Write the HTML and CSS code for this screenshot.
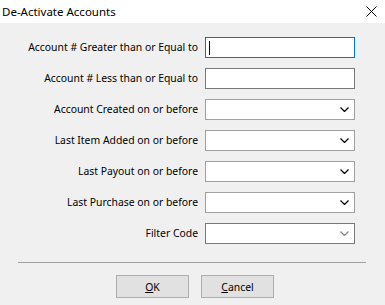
FILE: index.html
```html
<!DOCTYPE html>
<html><head>
<meta http-equiv="Content-Type" content="text/html; charset=utf-8">
<title>De-Activate Accounts</title>
<link rel="stylesheet" href="styles.css"></head>

<body>
<div class="titlebar">
<span class="title">De-Activate Accounts</span>
<svg class="close" width="11" height="11" viewBox="0 0 11 11"><path d="M0.5 0.5 L10.5 10.5 M10.5 0.5 L0.5 10.5" stroke="#000" stroke-width="1"/></svg>
</div>

<div class="form">
<label>Account # Greater than or Equal to</label>
<div class="field focus"><span class="caret"></span></div>

<label>Account # Less than or Equal to</label>
<div class="field"></div>

<label>Account Created on or before</label>
<div class="field combo"><svg class="arrow" width="9" height="5" viewBox="0 0 9 5"><path d="M0.5 0.5 L4.5 4.5 L8.5 0.5" fill="none" stroke="#000" stroke-width="1.3"/></svg></div>

<label>Last Item Added on or before</label>
<div class="field combo"><svg class="arrow" width="9" height="5" viewBox="0 0 9 5"><path d="M0.5 0.5 L4.5 4.5 L8.5 0.5" fill="none" stroke="#000" stroke-width="1.3"/></svg></div>

<label>Last Payout on or before</label>
<div class="field combo"><svg class="arrow" width="9" height="5" viewBox="0 0 9 5"><path d="M0.5 0.5 L4.5 4.5 L8.5 0.5" fill="none" stroke="#000" stroke-width="1.3"/></svg></div>

<label>Last Purchase on or before</label>
<div class="field combo"><svg class="arrow" width="9" height="5" viewBox="0 0 9 5"><path d="M0.5 0.5 L4.5 4.5 L8.5 0.5" fill="none" stroke="#000" stroke-width="1.3"/></svg></div>

<label>Filter Code</label>
<div class="field combo dark"><svg class="arrow" width="9" height="5" viewBox="0 0 9 5"><path d="M0.5 0.5 L4.5 4.5 L8.5 0.5" fill="none" stroke="#888" stroke-width="1.3"/></svg></div>
</div>

<hr class="sep">

<div class="buttons">
<button class="button"><u>O</u>K</button>
<button class="button"><u>C</u>ancel</button>
</div>
</body>
</html>
```

FILE: styles.css
```css
/* dialog window */
body {
	margin: 0;
	background-color: #f0f0f0;
	font-family: "Noto Sans", "Open Sans", sans-serif;
	font-size: 10.4px;
	color: #000;
	width: 385px;
	height: 305px;
	overflow: hidden;
}

.titlebar {
	background-color: #ffffff;
	height: 23px;
	display: flex;
	align-items: center;
	justify-content: space-between;
	padding: 0 8px 0 2px;
}
.title {
	font-size: 11.5px;
	color: #000;
}

/* labels + inputs */
.form {
	display: grid;
	grid-template-columns: 190px 150px;
	column-gap: 7px;
	row-gap: 10px;
	margin: 14px 0 0 8px;
}
.form label {
	text-align: right;
	line-height: 21px;
	height: 21px;
	white-space: nowrap;
}
.field {
	box-sizing: border-box;
	height: 21px;
	background-color: #ffffff;
	border: 1px solid #7a7a7a;
	display: flex;
	align-items: center;
}
.field.focus {
	border-color: #0078d7;
}
.field.combo {
	border-color: #a0a0a0;
	justify-content: flex-end;
	padding-right: 5px;
}
.field.dark {
	border-color: #7a7a7a;
}
.caret {
	width: 1px;
	height: 14px;
	margin-left: 3px;
	background-color: #000;
}

.sep {
	margin: 18px 19px 0 18px;
	border: 0;
	border-top: 1px solid #a0a0a0;
	height: 0;
}

.buttons {
	display: flex;
	gap: 12px;
	margin: 12px 0 0 116px;
}
.button {
	width: 73px;
	height: 23px;
	background-color: #e1e1e1;
	border: 1px solid #adadad;
	border-radius: 0;
	font-family: "Noto Sans", "Open Sans", sans-serif;
	font-size: 10.4px;
	color: #000;
	padding: 0;
}
```
